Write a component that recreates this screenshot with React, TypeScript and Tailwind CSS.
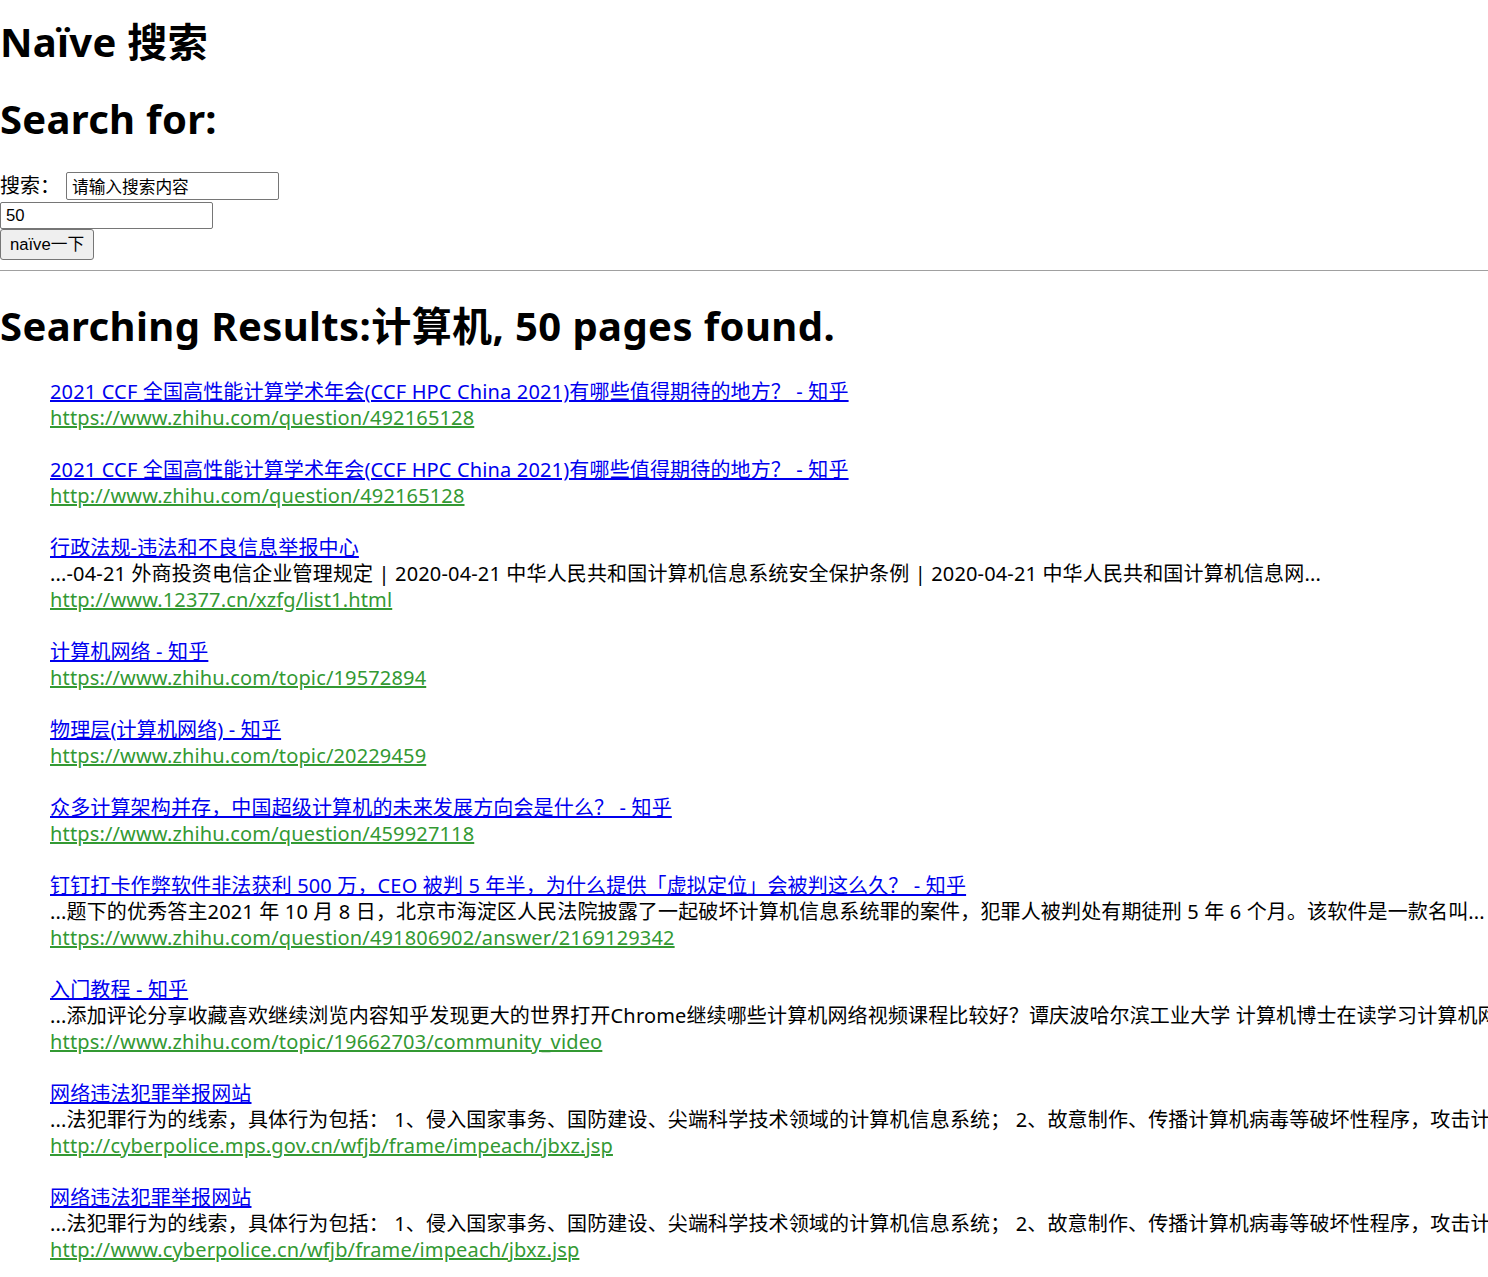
import React from "react"

type Result = { title: string; snippet?: string; url: string }

const results: Result[] = [
  {
    title: "2021 CCF 全国高性能计算学术年会(CCF HPC China 2021)有哪些值得期待的地方？ - 知乎",
    url: "https://www.zhihu.com/question/492165128",
  },
  {
    title: "2021 CCF 全国高性能计算学术年会(CCF HPC China 2021)有哪些值得期待的地方？ - 知乎",
    url: "http://www.zhihu.com/question/492165128",
  },
  {
    title: "行政法规-违法和不良信息举报中心",
    snippet:
      "...-04-21 外商投资电信企业管理规定 | 2020-04-21 中华人民共和国计算机信息系统安全保护条例 | 2020-04-21 中华人民共和国计算机信息网...",
    url: "http://www.12377.cn/xzfg/list1.html",
  },
  { title: "计算机网络 - 知乎", url: "https://www.zhihu.com/topic/19572894" },
  { title: "物理层(计算机网络) - 知乎", url: "https://www.zhihu.com/topic/20229459" },
  {
    title: "众多计算架构并存，中国超级计算机的未来发展方向会是什么？ - 知乎",
    url: "https://www.zhihu.com/question/459927118",
  },
  {
    title: "钉钉打卡作弊软件非法获利 500 万，CEO 被判 5 年半，为什么提供「虚拟定位」会被判这么久？ - 知乎",
    snippet:
      "...题下的优秀答主2021 年 10 月 8 日，北京市海淀区人民法院披露了一起破坏计算机信息系统罪的案件，犯罪人被判处有期徒刑 5 年 6 个月。该软件是一款名叫...",
    url: "https://www.zhihu.com/question/491806902/answer/2169129342",
  },
  {
    title: "入门教程 - 知乎",
    snippet:
      "...添加评论分享收藏喜欢继续浏览内容知乎发现更大的世界打开Chrome继续哪些计算机网络视频课程比较好？谭庆波哈尔滨工业大学 计算机博士在读学习计算机网络...",
    url: "https://www.zhihu.com/topic/19662703/community_video",
  },
  {
    title: "网络违法犯罪举报网站",
    snippet:
      "...法犯罪行为的线索，具体行为包括： 1、侵入国家事务、国防建设、尖端科学技术领域的计算机信息系统； 2、故意制作、传播计算机病毒等破坏性程序，攻击计算...",
    url: "http://cyberpolice.mps.gov.cn/wfjb/frame/impeach/jbxz.jsp",
  },
  {
    title: "网络违法犯罪举报网站",
    snippet:
      "...法犯罪行为的线索，具体行为包括： 1、侵入国家事务、国防建设、尖端科学技术领域的计算机信息系统； 2、故意制作、传播计算机病毒等破坏性程序，攻击计算...",
    url: "http://www.cyberpolice.cn/wfjb/frame/impeach/jbxz.jsp",
  },
]

export default function App() {
  return (
    <div className="min-h-[1277px] w-[1488px] overflow-hidden bg-white font-['Noto_Sans','Noto_Sans_CJK_SC',sans-serif] text-black">
      {/* Title */}
      <h1 className="mt-[15px] text-[40px] font-bold leading-[53px] tracking-[0.3px]">Naïve 搜索</h1>
      <h2 className="mt-[24px] text-[40px] font-bold leading-[53px] tracking-[0.3px]">Search for:</h2>

      {/* Form */}
      <form className="mt-[27px] flex flex-col items-start" onSubmit={(e) => e.preventDefault()}>
        <div className="flex items-center">
          <label className="w-[66px] text-[20px] leading-[26px]">搜索：</label>
          <input
            className="h-[28px] w-[213px] rounded-[2px] border border-[#767676] px-[5px] font-['Liberation_Sans','Noto_Sans_CJK_SC',sans-serif] text-[16.7px] text-black outline-none"
            defaultValue="请输入搜索内容"
          />
        </div>
        <input
          className="mt-[2px] h-[27px] w-[213px] rounded-[2px] border border-[#767676] px-[5px] font-['Liberation_Sans','Noto_Sans_CJK_SC',sans-serif] text-[16.7px] text-black outline-none"
          defaultValue="50"
        />
        <button
          type="submit"
          className="h-[31px] w-[94px] rounded-[3px] border border-[#767676] bg-[#efefef] font-['Liberation_Sans','Noto_Sans_CJK_SC',sans-serif] text-[16.7px] text-black"
        >
          naïve一下
        </button>
      </form>

      <hr className="mt-[10px] border-t-[1.5px] border-[#a0a0a0]" />

      {/* Results */}
      <h1 className="mt-[28px] whitespace-nowrap text-[40px] font-bold leading-[53px] tracking-[0.4px]">
        Searching Results:计算机, 50 pages found.
      </h1>

      <ul className="mt-[27px] pl-[50px] text-[20px] leading-[26px] tracking-[0.15px]">
        {results.map((r, i) => (
          <li key={i} className="mb-[26px] whitespace-nowrap">
            <a href="#" className="block text-[#0000ee] underline">
              {r.title}
            </a>
            {r.snippet && <div>{r.snippet}</div>}
            <a href="#" className="block text-[#339933] underline">
              {r.url}
            </a>
          </li>
        ))}
      </ul>
    </div>
  )
}
